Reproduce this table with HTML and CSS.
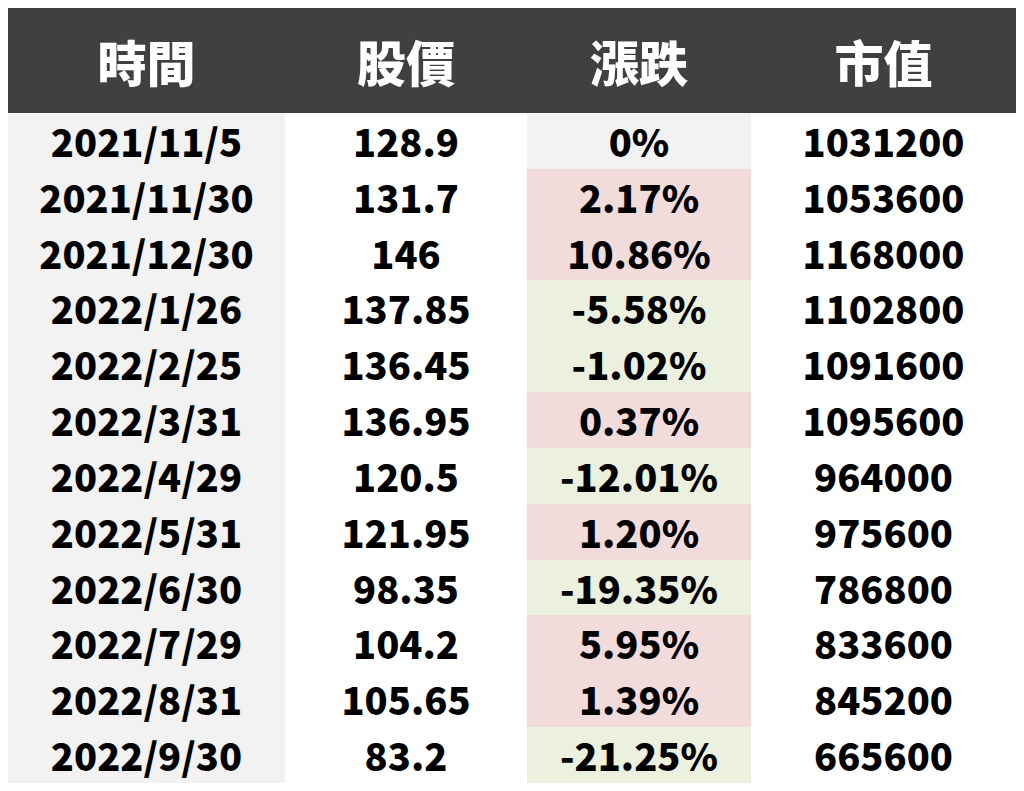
FILE: index.html
```html
<!DOCTYPE html>
<html lang="zh-Hant">
<head>
<meta charset="utf-8">
<link rel="stylesheet" href="styles.css">
</head>
<body>
<div class="table">
  <div class="head">時間</div><div class="head">股價</div><div class="head">漲跌</div><div class="head">市值</div>
  <div class="c date">2021/11/5</div><div class="c">128.9</div><div class="c zero">0%</div><div class="c">1031200</div>
  <div class="c date">2021/11/30</div><div class="c">131.7</div><div class="c up">2.17%</div><div class="c">1053600</div>
  <div class="c date">2021/12/30</div><div class="c">146</div><div class="c up">10.86%</div><div class="c">1168000</div>
  <div class="c date">2022/1/26</div><div class="c">137.85</div><div class="c down">-5.58%</div><div class="c">1102800</div>
  <div class="c date">2022/2/25</div><div class="c">136.45</div><div class="c down">-1.02%</div><div class="c">1091600</div>
  <div class="c date">2022/3/31</div><div class="c">136.95</div><div class="c up">0.37%</div><div class="c">1095600</div>
  <div class="c date">2022/4/29</div><div class="c">120.5</div><div class="c down">-12.01%</div><div class="c">964000</div>
  <div class="c date">2022/5/31</div><div class="c">121.95</div><div class="c up">1.20%</div><div class="c">975600</div>
  <div class="c date">2022/6/30</div><div class="c">98.35</div><div class="c down">-19.35%</div><div class="c">786800</div>
  <div class="c date">2022/7/29</div><div class="c">104.2</div><div class="c up">5.95%</div><div class="c">833600</div>
  <div class="c date">2022/8/31</div><div class="c">105.65</div><div class="c up">1.39%</div><div class="c">845200</div>
  <div class="c date">2022/9/30</div><div class="c">83.2</div><div class="c down">-21.25%</div><div class="c">665600</div>
</div>
</body>
</html>
```
FILE: styles.css
```css
html, body { margin: 0; padding: 0; background: #ffffff; }
body { padding: 8px; }
.table {
  display: grid;
  grid-template-columns: 277px 242px 224px 265px;
  grid-template-rows: 105px repeat(12, 55.83px);
  font-family: "Noto Sans CJK TC", "Noto Sans", sans-serif;
  font-weight: 700;
  color: #000;
}
.head {
  background: #404040;
  color: #fff;
  font-size: 49px;
  font-weight: 900;
  display: flex;
  align-items: center;
  justify-content: center;
  line-height: 1;
}
.c {
  font-size: 38px;
  font-weight: 900;
  display: flex;
  align-items: center;
  justify-content: center;
  line-height: 1;
}
.date { background: #f2f2f2; }
.zero { background: #f2f2f2; }
.up { background: #f2dcdb; }
.down { background: #ebf1de; }
```
